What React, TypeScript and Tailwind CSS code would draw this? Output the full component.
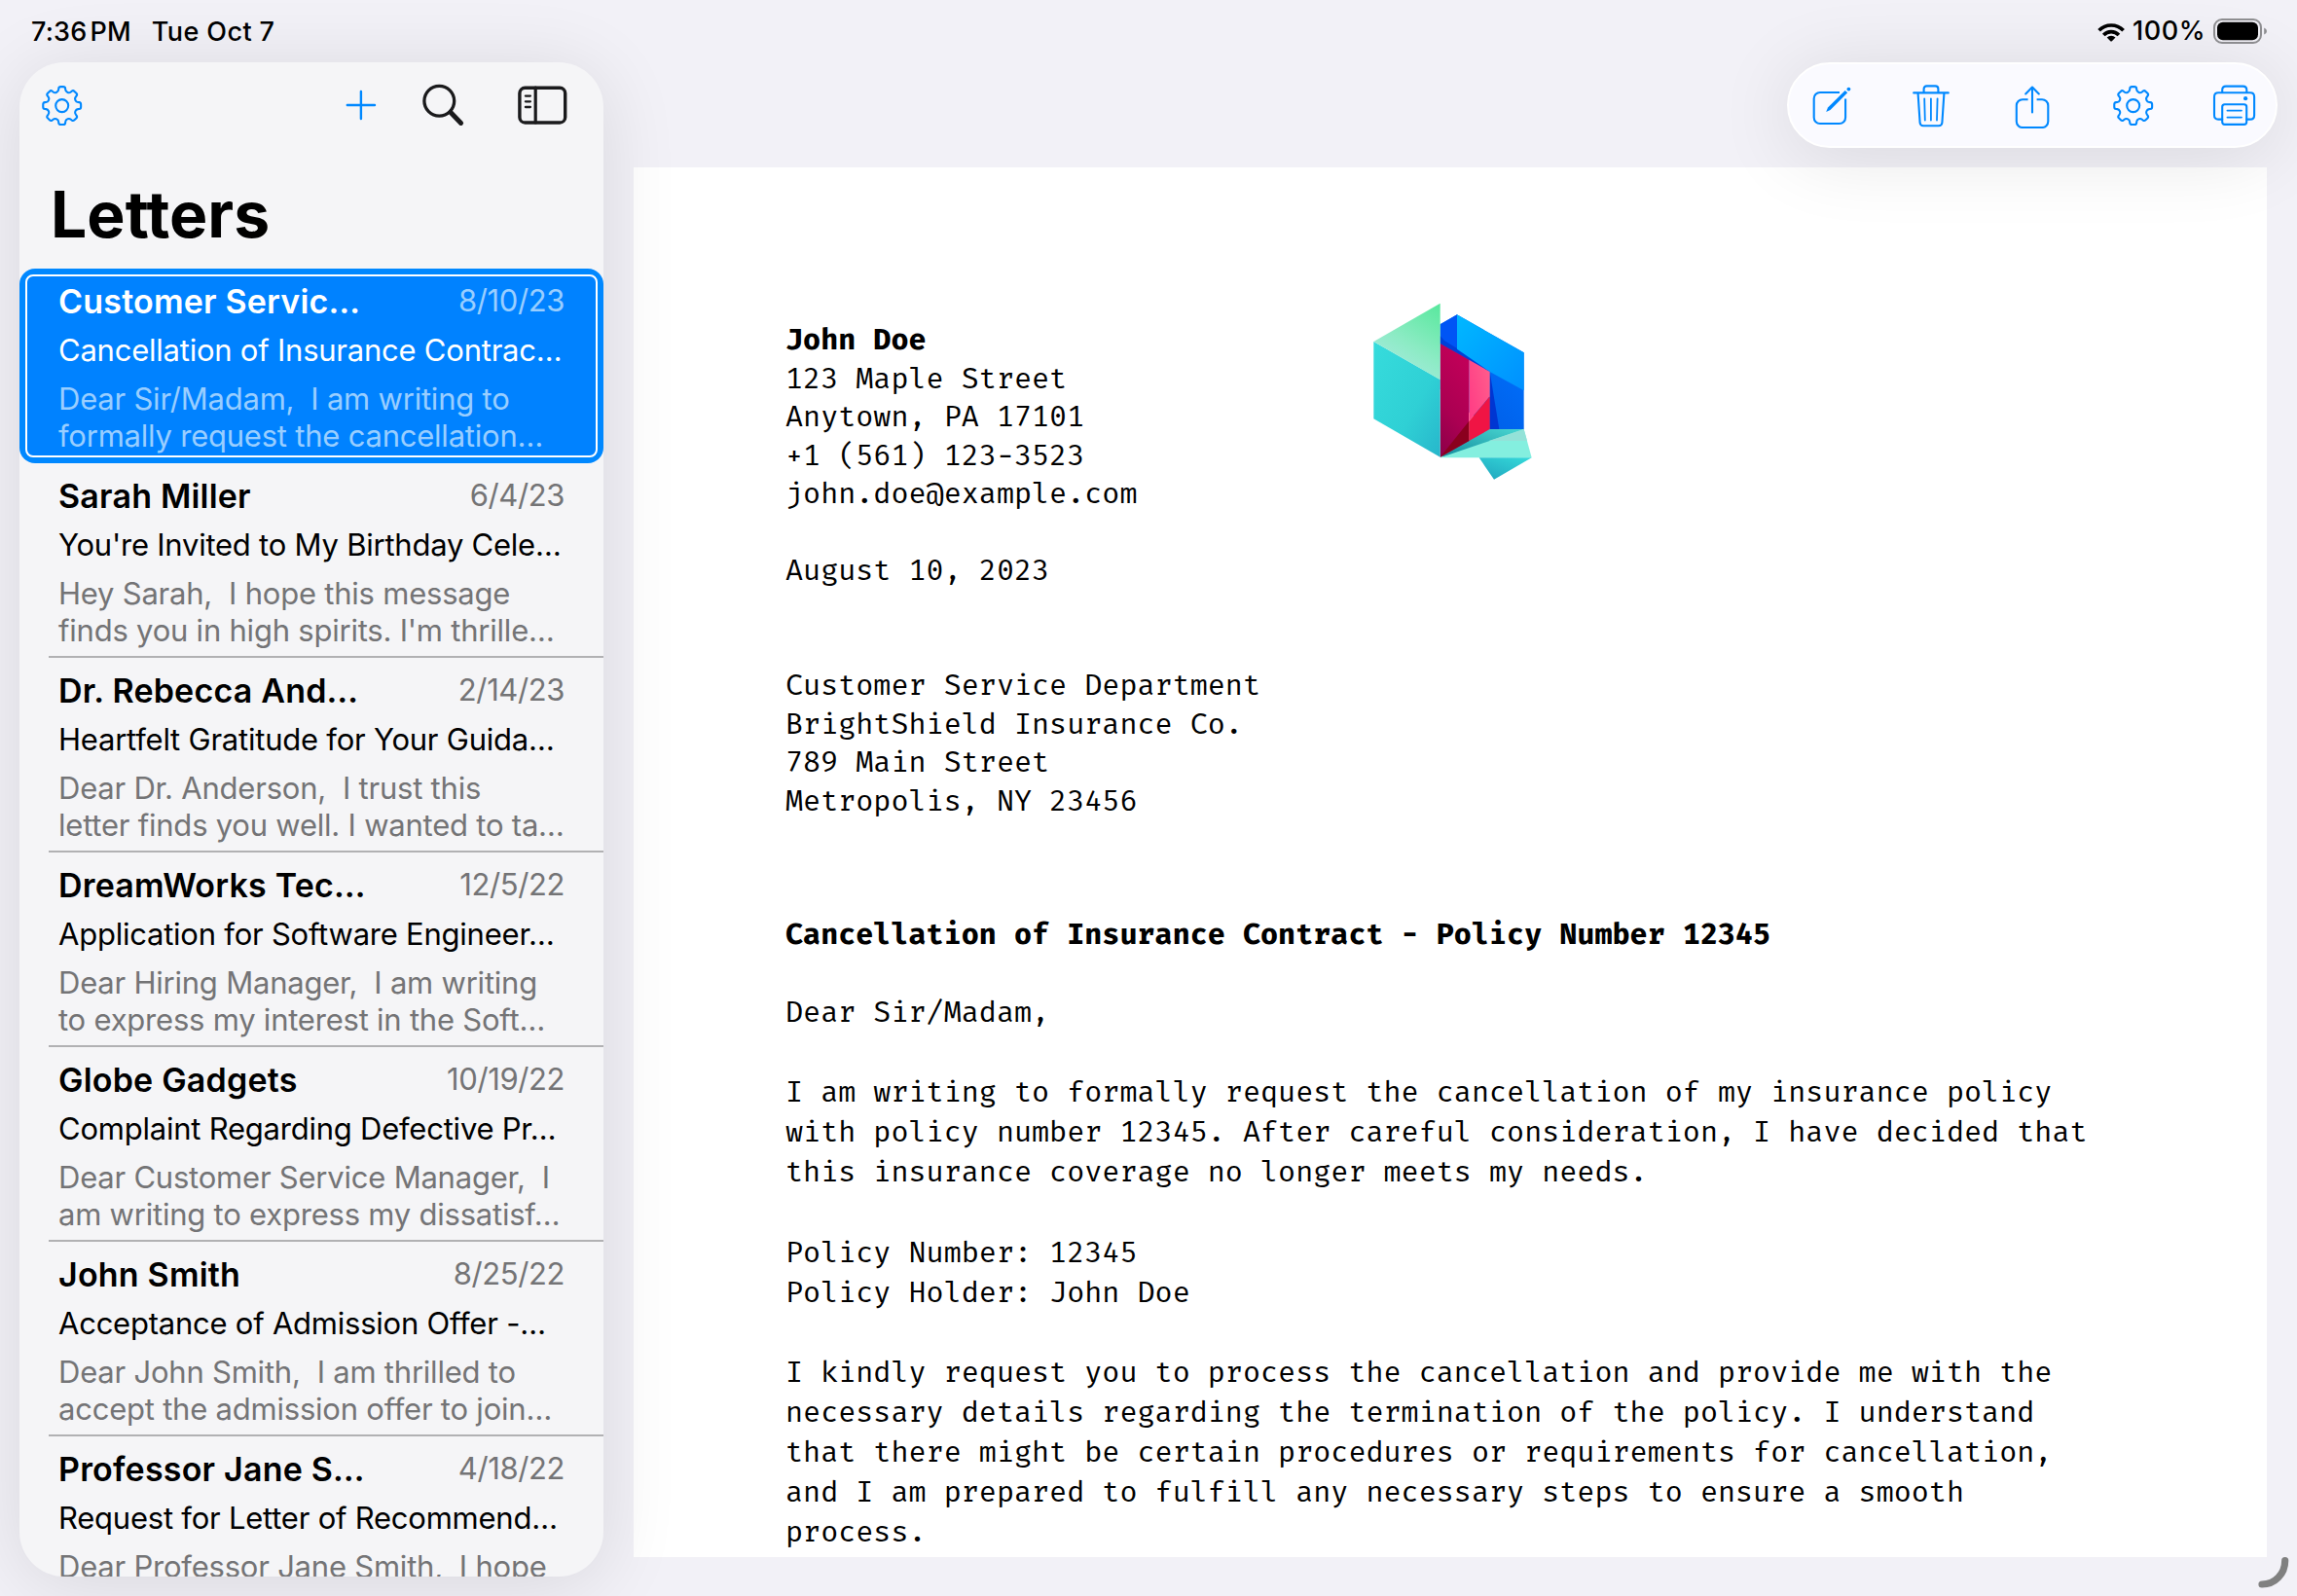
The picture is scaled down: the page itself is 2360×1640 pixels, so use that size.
import type { ReactNode } from "react";

type Letter = {
  name: string;
  date: string;
  subject: string;
  preview: string[];
};

const letters: Letter[] = [
  {
    name: "Customer Servic…",
    date: "8/10/23",
    subject: "Cancellation of Insurance Contrac…",
    preview: ["Dear Sir/Madam,  I am writing to", "formally request the cancellation…"],
  },
  {
    name: "Sarah Miller",
    date: "6/4/23",
    subject: "You're Invited to My Birthday Cele…",
    preview: ["Hey Sarah,  I hope this message", "finds you in high spirits. I'm thrille…"],
  },
  {
    name: "Dr. Rebecca And…",
    date: "2/14/23",
    subject: "Heartfelt Gratitude for Your Guida…",
    preview: ["Dear Dr. Anderson,  I trust this", "letter finds you well. I wanted to ta…"],
  },
  {
    name: "DreamWorks Tec…",
    date: "12/5/22",
    subject: "Application for Software Engineer…",
    preview: ["Dear Hiring Manager,  I am writing", "to express my interest in the Soft…"],
  },
  {
    name: "Globe Gadgets",
    date: "10/19/22",
    subject: "Complaint Regarding Defective Pr…",
    preview: ["Dear Customer Service Manager,  I", "am writing to express my dissatisf…"],
  },
  {
    name: "John Smith",
    date: "8/25/22",
    subject: "Acceptance of Admission Offer -…",
    preview: ["Dear John Smith,  I am thrilled to", "accept the admission offer to join…"],
  },
  {
    name: "Professor Jane S…",
    date: "4/18/22",
    subject: "Request for Letter of Recommend…",
    preview: ["Dear Professor Jane Smith,  I hope"],
  },
];

const senderLines = [
  "123 Maple Street",
  "Anytown, PA 17101",
  "+1 (561) 123-3523",
  "john.doe@example.com",
  "",
  "August 10, 2023",
  "",
  "",
  "Customer Service Department",
  "BrightShield Insurance Co.",
  "789 Main Street",
  "Metropolis, NY 23456",
];

const bodyLines = [
  "Dear Sir/Madam,",
  "",
  "I am writing to formally request the cancellation of my insurance policy",
  "with policy number 12345. After careful consideration, I have decided that",
  "this insurance coverage no longer meets my needs.",
  "",
  "Policy Number: 12345",
  "Policy Holder: John Doe",
  "",
  "I kindly request you to process the cancellation and provide me with the",
  "necessary details regarding the termination of the policy. I understand",
  "that there might be certain procedures or requirements for cancellation,",
  "and I am prepared to fulfill any necessary steps to ensure a smooth",
  "process.",
];

/* Closed outline of an eight-toothed gear with softened corners. */
function gearOutline(cx: number, cy: number, tip: number, root: number) {
  const pts: [number, number][] = [];
  for (let i = 0; i < 8; i++) {
    for (const [r, off] of [[root, -14.5], [tip, -9.5], [tip, 9.5], [root, 14.5]]) {
      const a = ((i * 45 + off - 90) * Math.PI) / 180;
      pts.push([cx + r * Math.cos(a), cy + r * Math.sin(a)]);
    }
  }
  const n = pts.length;
  const toward = (p: [number, number], q: [number, number], d: number) => {
    const len = Math.hypot(q[0] - p[0], q[1] - p[1]);
    const k = d / len;
    return `${(p[0] + (q[0] - p[0]) * k).toFixed(2)} ${(p[1] + (q[1] - p[1]) * k).toFixed(2)}`;
  };
  let d = "";
  for (let i = 0; i < n; i++) {
    const p = pts[i];
    const prev = pts[(i + n - 1) % n];
    const next = pts[(i + 1) % n];
    d += `${i ? "L" : "M"}${toward(p, prev, 1.9)}Q${p[0].toFixed(2)} ${p[1].toFixed(2)} ${toward(p, next, 1.9)}`;
  }
  return d + "Z";
}

const gearPath = gearOutline(23.7, 24.6, 19.7, 15);

function Icon({ children }: { children: ReactNode }) {
  return (
    <svg
      className="size-12 shrink-0 text-[#0088ff]"
      viewBox="0 0 48 48"
      fill="none"
      stroke="currentColor"
      strokeWidth={2.1}
      strokeLinecap="round"
      strokeLinejoin="round"
    >
      {children}
    </svg>
  );
}

function GearIcon() {
  return (
    <Icon>
      <path d={gearPath} />
      <circle cx="23.7" cy="24.6" r="6.5" />
    </Icon>
  );
}

function ComposeIcon() {
  return (
    <Icon>
      <path d="M34 11H14A6.3 6.3 0 0 0 7.7 17.3V36.7A6.3 6.3 0 0 0 14 43H33.8A6.3 6.3 0 0 0 40.1 36.7V17.5" strokeLinecap="butt" />
      <path d="M20.2 30.9L22 26.6L39.7 8.9L42.2 11.3L24.5 29Z" fill="currentColor" stroke="none" />
      <circle cx="43.4" cy="7.6" r="1.9" fill="currentColor" stroke="none" />
    </Icon>
  );
}

function TrashIcon() {
  return (
    <Icon>
      <path d="M6.2 11.4H41.8" />
      <path d="M16.6 11V7.4Q16.6 4.4 19.6 4.4H28.4Q31.4 4.4 31.4 7.4V11" />
      <path d="M10.6 12L12.6 42Q12.9 45.2 16 45.2H32Q35.1 45.2 35.4 42L37.4 12" />
      <path d="M17.2 17.3L17.8 39.5M23.9 17.3V39.5M30.6 17.3L30 39.5" strokeWidth={1.8} />
    </Icon>
  );
}

function ShareIcon() {
  return (
    <Icon>
      <path d="M19.6 18.2H14A6.2 6.2 0 0 0 7.8 24.4V40.8A6.2 6.2 0 0 0 14 47H34.1A6.2 6.2 0 0 0 40.3 40.8V24.4A6.2 6.2 0 0 0 34.1 18.2H28.6" strokeLinecap="butt" />
      <path d="M24 5.8V31.5M17.2 12.4L24 5.6L30.8 12.4" />
    </Icon>
  );
}

function PrinterIcon() {
  return (
    <Icon>
      <path d="M11.2 11V8.4Q11.2 4.6 15 4.6H32.5Q36.3 4.6 36.3 8.4V11" />
      <path d="M11.2 38.6H7.2Q3 38.6 3 34.4V15.4Q3 11.2 7.2 11.2H39.9Q44.1 11.2 44.1 15.4V34.4Q44.1 38.6 39.9 38.6H36.2" />
      <rect x="11.2" y="23.2" width="25" height="20.7" rx="2.6" />
      <path d="M16.4 29.6H31M16.4 36.6H31" strokeWidth={1.8} />
      <circle cx="35.1" cy="17.2" r="2.1" fill="currentColor" stroke="none" />
    </Icon>
  );
}

function StatusBar() {
  return (
    <header className="flex h-16 shrink-0 justify-between pr-[30px] pl-8 text-[27px] font-medium text-black">
      <div className="flex gap-[21px] pt-px leading-16">
        <span className="tracking-[0.2px]">
          7:36<span className="ml-[3px]">PM</span>
        </span>
        <span className="tracking-[0.4px]">Tue Oct 7</span>
      </div>
      <div className="flex items-center">
        <svg className="mr-[7px] h-6 w-[30px]" viewBox="0 0 30 24" fill="none" stroke="#000" strokeWidth={3.7}>
          <path d="M2.6 11.3A17.4 17.4 0 0 1 27.6 11.3" />
          <path d="M7.3 16A10.9 10.9 0 0 1 22.9 16" />
          <path d="M10.7 18.6A6.2 6.2 0 0 1 19.5 18.6L15.9 22.2Q15.1 22.9 14.3 22.2Z" fill="#000" stroke="none" />
        </svg>
        <span className="pt-px tracking-[0.5px]">100%</span>
        <svg className="ml-[8px] h-[26px] w-[56px]" viewBox="0 0 56 26" fill="none">
          <rect x="1" y="1" width="48" height="24" rx="8" stroke="#8f8f92" strokeWidth={2} />
          <rect x="4" y="3.7" width="42" height="18.6" rx="5.8" fill="#000" />
          <path d="M52.2 9.4Q55 10.4 55 13Q55 15.6 52.2 16.6Z" fill="#8f8f92" />
        </svg>
      </div>
    </header>
  );
}

function LetterRow({ letter, selected, last }: { letter: Letter; selected: boolean; last: boolean }) {
  return (
    <li
      className={
        selected
          ? "relative h-[200px] shrink-0 rounded-[16px] bg-[#0088ff] p-1.5"
          : "relative h-[200px] shrink-0 p-1.5"
      }
    >
      <div
        className={
          selected
            ? "h-full rounded-[8px] border-2 border-white bg-[#0082ff] pt-1 pr-[32px] pl-[32px] text-white"
            : "h-full border-2 border-transparent pt-1 pr-[32px] pl-[32px] text-black"
        }
      >
        <div className="flex h-[42px] items-center justify-between">
          <span className="text-[34px] font-semibold tracking-[0.2px] whitespace-pre">{letter.name}</span>
          <span
            className={
              selected
                ? "text-[31px] tracking-[-0.4px] text-[#99ceff]"
                : "text-[31px] tracking-[-0.4px] text-[#747476]"
            }
          >
            {letter.date}
          </span>
        </div>
        <p className="mt-[9px] text-[31px] leading-[42px] tracking-[-0.23px] whitespace-pre">{letter.subject}</p>
        <div
          className={
            selected
              ? "mt-[9.5px] text-[31px] leading-[38.3px] tracking-[-0.22px] whitespace-pre text-[#99ceff]"
              : "mt-[9.5px] text-[31px] leading-[38.3px] tracking-[-0.22px] whitespace-pre text-[#747476]"
          }
        >
          {letter.preview.map((line) => (
            <p key={line}>{line}</p>
          ))}
        </div>
      </div>
      {!selected && !last && <div className="absolute right-0 bottom-0 left-[30px] h-0.5 bg-[#b1b1b3]" />}
    </li>
  );
}

function Sidebar() {
  return (
    <aside className="relative z-10 ml-5 flex h-[1556px] w-[600px] shrink-0 flex-col rounded-[46px] bg-[#f5f5f7] shadow-[0_8px_80px_rgba(0,0,0,0.11)]">
      <div className="flex h-[212px] shrink-0 flex-col">
        <div className="flex h-[88px] items-center pl-[19.7px]">
          <GearIcon />
          <svg className="ml-[267px] size-8" viewBox="0 0 32 32" stroke="#0088ff" strokeWidth={2.4} strokeLinecap="round">
            <path d="M1.8 16H30M15.9 1.9V30.1" />
          </svg>
          <svg className="ml-[45px] size-12" viewBox="0 0 48 48" fill="none" stroke="#1a1a1c" strokeLinecap="round">
            <circle cx="19.3" cy="19.7" r="15.4" strokeWidth={3.3} />
            <path d="M30.8 31.2L41.6 42.4" strokeWidth={5} />
          </svg>
          <svg className="ml-[50px] h-12 w-[54px]" viewBox="0 0 54 48" fill="none" stroke="#1a1a1c" strokeLinecap="round">
            <rect x="3.9" y="6.2" width="46.8" height="35.8" rx="5.6" strokeWidth={3.4} />
            <path d="M20.2 6.2V42" strokeWidth={3.2} />
            <path d="M9.9 14.6H14.9M9.9 20.3H14.9M9.9 26H14.9" strokeWidth={2.3} />
          </svg>
        </div>
        <h1 className="mt-7 pl-8 text-[66px] leading-[80px] font-bold text-black">Letters</h1>
      </div>
      <ul className="flex h-[1344px] flex-col overflow-hidden rounded-b-[46px]">
        {letters.map((letter, i) => (
          <LetterRow key={letter.name} letter={letter} selected={i === 0} last={i === letters.length - 1} />
        ))}
      </ul>
    </aside>
  );
}

function Toolbar() {
  return (
    <nav className="relative z-10 mr-5 flex h-[88px] w-[504px] shrink-0 items-center justify-between self-end rounded-full border-2 border-white bg-[#fafaff] px-[18px] shadow-[0_8px_80px_rgba(0,0,0,0.11)]">
      <ComposeIcon />
      <TrashIcon />
      <ShareIcon />
      <GearIcon />
      <PrinterIcon />
    </nav>
  );
}

function Logo() {
  return (
    <svg className="h-[184px] w-[165px] shrink-0" viewBox="90 60 495 552">
      <defs>
        <linearGradient id="lidGreen" x1="1" y1="0" x2="0.45" y2="1">
          <stop offset="0" stopColor="#57e89c" />
          <stop offset="0.6" stopColor="#8cebc4" />
          <stop offset="1" stopColor="#a6eadf" />
        </linearGradient>
        <linearGradient id="sideTeal" x1="0" y1="0" x2="1" y2="1">
          <stop offset="0" stopColor="#36dcdc" />
          <stop offset="0.6" stopColor="#2fd0d5" />
          <stop offset="1" stopColor="#27b6cb" />
        </linearGradient>
        <linearGradient id="skyBlue" x1="0" y1="0" x2="1" y2="1">
          <stop offset="0" stopColor="#00b8ff" />
          <stop offset="1" stopColor="#0090ff" />
        </linearGradient>
        <linearGradient id="deepBlue" x1="0" y1="1" x2="0.8" y2="0">
          <stop offset="0" stopColor="#0058e0" />
          <stop offset="1" stopColor="#0073ff" />
        </linearGradient>
        <linearGradient id="wine" x1="0.3" y1="0" x2="0" y2="1">
          <stop offset="0" stopColor="#c00058" />
          <stop offset="0.55" stopColor="#ab0052" />
          <stop offset="1" stopColor="#8a0048" />
        </linearGradient>
        <linearGradient id="pink" x1="1" y1="0.2" x2="0" y2="0.8">
          <stop offset="0" stopColor="#ff5c8c" />
          <stop offset="1" stopColor="#ff3d85" />
        </linearGradient>
        <linearGradient id="tailTeal" x1="1" y1="0" x2="0.2" y2="1">
          <stop offset="0" stopColor="#35dada" />
          <stop offset="1" stopColor="#22a9c0" />
        </linearGradient>
        <linearGradient id="foldTeal" x1="0" y1="1" x2="1" y2="0">
          <stop offset="0" stopColor="#128a9c" />
          <stop offset="1" stopColor="#4ad8d2" />
        </linearGradient>
      </defs>
      <path d="M299 130L351 100L557 217V453H452L299 330Z" fill="url(#deepBlue)" />
      <path d="M299 130L351 100V215L452 275L299 190Z" fill="#0055f5" />
      <path d="M299 165L312 180L351 204L452 272V277L299 190Z" fill="#0040d8" />
      <path d="M351 100L557 217V334L452 276L351 206Z" fill="url(#skyBlue)" />
      <path d="M452 276L481 453H452Z" fill="#0036d2" />
      <path d="M445 453H557V500L299 539Z" fill="url(#foldTeal)" />
      <path d="M557 453L581 541H299Z" fill="#84efdf" />
      <path d="M557 453L567 489H449Z" fill="#93e2d8" />
      <path d="M419 541H581L465 608Z" fill="url(#tailTeal)" />
      <path d="M299 189L388 239V489L299 539Z" fill="url(#wine)" />
      <path d="M388 239L452 276V352L388 428Z" fill="url(#pink)" />
      <path d="M452 352V453L388 489V428Z" fill="#f01444" />
      <path d="M388 428V489L299 539Z" fill="#8a001e" />
      <path d="M94 183L299 300V539L94 421Z" fill="url(#sideTeal)" />
      <path d="M94 183L299 65V301Z" fill="url(#lidGreen)" />
    </svg>
  );
}

function LetterPage() {
  return (
    <main className="mt-5 h-[1428px] w-[1678px] overflow-hidden bg-white pt-[138px] pl-[156px] font-['Fira_Mono','Liberation_Mono',monospace] text-[30.14px] whitespace-pre text-black">
      <div className="flex items-start">
        <div className="w-[603px] shrink-0 pt-5">
          <p className="h-[39.8px] leading-[39.4px] font-bold">John Doe</p>
          {senderLines.map((line, i) => (
            <p key={i} className="h-[39.45px] leading-[39.45px]">
              {line}
            </p>
          ))}
        </div>
        <Logo />
      </div>
      <h2 className="mt-[97px] h-[41px] leading-[41px] font-bold">
        Cancellation of Insurance Contract - Policy Number 12345
      </h2>
      <div className="mt-[39px]">
        {bodyLines.map((line, i) => (
          <p key={i} className="h-[41.1px] leading-[41.1px]">
            {line}
          </p>
        ))}
      </div>
    </main>
  );
}

export default function App() {
  return (
    <div className="relative flex h-[1640px] w-[2360px] flex-col overflow-hidden bg-[#f2f1f7] font-['Inter',sans-serif]">
      <StatusBar />
      <div className="flex">
        <Sidebar />
        <div className="ml-[31px] flex grow flex-col">
          <Toolbar />
          <LetterPage />
        </div>
      </div>
      <svg className="absolute right-1 bottom-1 h-9 w-9" viewBox="0 0 36 36" fill="none">
        <path d="M27.7 3.7Q27.7 14 20.8 21Q14 28 4 28" stroke="#808080" strokeWidth={7.2} strokeLinecap="round" />
      </svg>
    </div>
  );
}
